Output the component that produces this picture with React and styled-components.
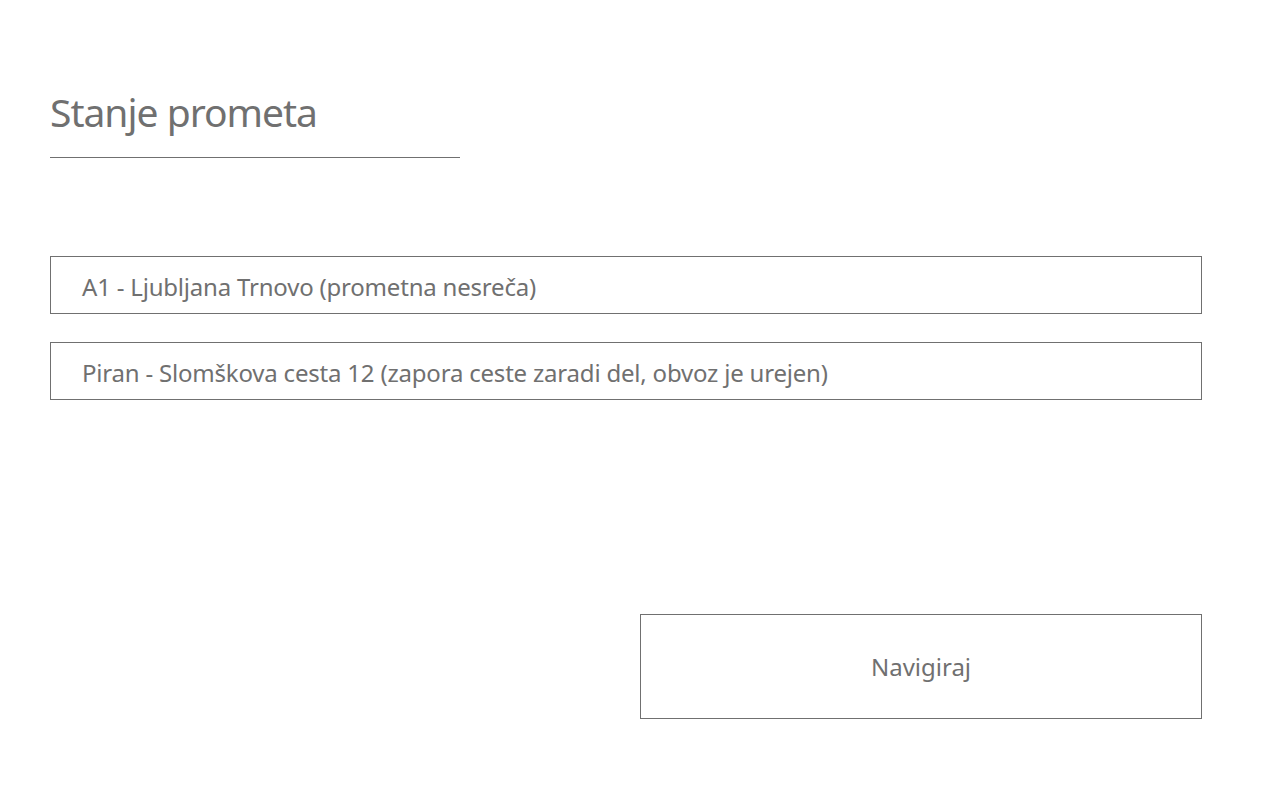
import styled, { createGlobalStyle } from "styled-components";

const GlobalStyle = createGlobalStyle`
  html, body {
    margin: 0;
    padding: 0;
    background: #ffffff;
  }
  body {
    font-family: "Noto Sans", "Open Sans", sans-serif;
    color: #707070;
  }
`;

const incidents = [
  "A1 - Ljubljana Trnovo (prometna nesreča)",
  "Piran - Slomškova cesta 12 (zapora ceste zaradi del, obvoz je urejen)",
];

const App = () => {
  return (
    <>
      <GlobalStyle />
      <Page>
        <Header>
          <Title>Stanje prometa</Title>
        </Header>
        <List>
          {incidents.map((item) => (
            <Item key={item}>{item}</Item>
          ))}
        </List>
        <Actions>
          <Button>Navigiraj</Button>
        </Actions>
      </Page>
    </>
  );
};

const Page = styled.div`
  width: 1280px;
  height: 800px;
  box-sizing: border-box;
  padding: 85px 0 0 50px;
`;

const Header = styled.div`
  width: 410px;
  padding-bottom: 18px;
  border-bottom: 1px solid #707070;
`;

const Title = styled.h1`
  margin: 0;
  font-size: 39px;
  line-height: 54px;
  letter-spacing: -1px;
  font-weight: 400;
  color: #707070;
`;

const List = styled.div`
  width: 1152px;
  margin-top: 98px;
  display: flex;
  flex-direction: column;
  gap: 28px;
`;

const Item = styled.div`
  height: 58px;
  box-sizing: border-box;
  border: 1px solid #707070;
  padding: 4px 31px 0;
  font-size: 24px;
  line-height: 52px;
  letter-spacing: -0.2px;
  color: #707070;
`;

const Actions = styled.div`
  width: 1152px;
  margin-top: 214px;
  display: flex;
  justify-content: flex-end;
`;

const Button = styled.button`
  width: 562px;
  height: 105px;
  box-sizing: border-box;
  border: 1px solid #707070;
  background: #ffffff;
  font-family: "Noto Sans", "Open Sans", sans-serif;
  font-size: 24px;
  color: #707070;
  cursor: pointer;
`;

export default App;
